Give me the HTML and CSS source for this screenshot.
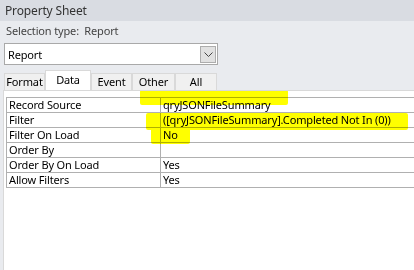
FILE: index.html
```html
<!DOCTYPE html>
<html lang="en">
<head>
  <meta charset="UTF-8">
  <title>Property Sheet</title>
  <link rel="stylesheet" href="styles.css">
</head>
<body>
  <div class="property-sheet">
    <div class="property-sheet__title">Property Sheet</div>
    <div class="property-sheet__selection">Selection type:&nbsp; Report</div>

    <div class="combo">
      <span class="combo__text">Report</span>
      <span class="combo__button">
        <svg width="9" height="5" viewBox="0 0 9 5"><path d="M0.5 0.5 L4.5 4.5 L8.5 0.5" fill="none" stroke="#444" stroke-width="1"/></svg>
      </span>
    </div>

    <div class="tabs">
      <div class="tab tab--format">Format</div>
      <div class="tab tab--data tab--active">Data</div>
      <div class="tab tab--event">Event</div>
      <div class="tab tab--other">Other</div>
      <div class="tab tab--all">All</div>
    </div>

    <div class="panel">
      <table class="props">
        <tr><td class="props__name">Record Source</td><td class="props__value">qryJSONFileSummary</td></tr>
        <tr><td class="props__name">Filter</td><td class="props__value">([qryJSONFileSummary].Completed Not In (0))</td></tr>
        <tr><td class="props__name">Filter On Load</td><td class="props__value">No</td></tr>
        <tr><td class="props__name">Order By</td><td class="props__value"></td></tr>
        <tr><td class="props__name">Order By On Load</td><td class="props__value">Yes</td></tr>
        <tr><td class="props__name">Allow Filters</td><td class="props__value">Yes</td></tr>
      </table>

      <!-- highlighter marks -->
      <span class="mark mark--one"></span>
      <span class="mark mark--two"></span>
      <span class="mark mark--three"></span>
    </div>
  </div>
</body>
</html>
```

FILE: styles.css
```css
/* Property sheet pane */
body {
  margin: 0;
  background: #e9ebef;
  font-family: "Noto Sans", "Open Sans", sans-serif;
  font-size: 11px;
  letter-spacing: -0.15px;
  color: #000;
}

.property-sheet {
  width: 414px;
  height: 270px;
  overflow: hidden;
  display: flex;
  flex-direction: column;
}

.property-sheet__title {
  height: 21px;
  line-height: 21px;
  padding-left: 5px;
  background: #d9dce2;
  color: #333;
  font-size: 12px;
}

.property-sheet__selection {
  height: 20px;
  line-height: 20px;
  padding-left: 6px;
  margin-bottom: 2px;
  color: #444;
}

.combo {
  margin-left: 4px;
  width: 214px;
  height: 22px;
  box-sizing: border-box;
  border: 1px solid #a9a9a9;
  background: #fff;
  display: flex;
  align-items: center;
  justify-content: space-between;
  padding: 0 1px 0 3px;
}

.combo__button {
  width: 16px;
  height: 17px;
  box-sizing: border-box;
  border: 1px solid #adadad;
  background: #e1e1e1;
  display: flex;
  align-items: center;
  justify-content: center;
}

.tabs {
  display: flex;
  align-items: flex-end;
  height: 20px;
  margin-top: 5px;
  padding-left: 4px;
}

.tab {
  height: 17px;
  line-height: 16px;
  box-sizing: border-box;
  border: 1px solid #d9d9d9;
  border-bottom: 0;
  background: #f0f0f0;
  text-align: center;
}

.tab--format { width: 41px; }
.tab--data { width: 46px; }
.tab--event { width: 41px; }
.tab--other { width: 43px; }
.tab--all { width: 42px; }

.tab--active {
  height: 21px;
  line-height: 18px;
  background: #fff;
  position: relative;
  margin-bottom: -1px;
}

.panel {
  flex: 1;
  position: relative;
  overflow: hidden;
  margin-left: 3px;
  background: #fff;
  border-top: 1px solid #d9d9d9;
  border-left: 1px solid #d9d9d9;
  padding: 6px 0 0 2px;
}

.props {
  border-collapse: collapse;
  table-layout: fixed;
  width: 480px;
  min-width: 480px;
}

.props td {
  height: 14px;
  padding: 0 0 0 2px;
  border: 1px solid #b0b0b0;
  line-height: 14px;
  white-space: nowrap;
}

.props__name {
  width: 151px;
}

.mark {
  position: absolute;
  background: #ffff00;
  mix-blend-mode: multiply;
  border-radius: 2px;
}

.mark--one { left: 136px; top: -1px; width: 148px; height: 15px; }
.mark--two { left: 142px; top: 22px; width: 262px; height: 17px; }
.mark--three { left: 147px; top: 37px; width: 39px; height: 16px; }
```
